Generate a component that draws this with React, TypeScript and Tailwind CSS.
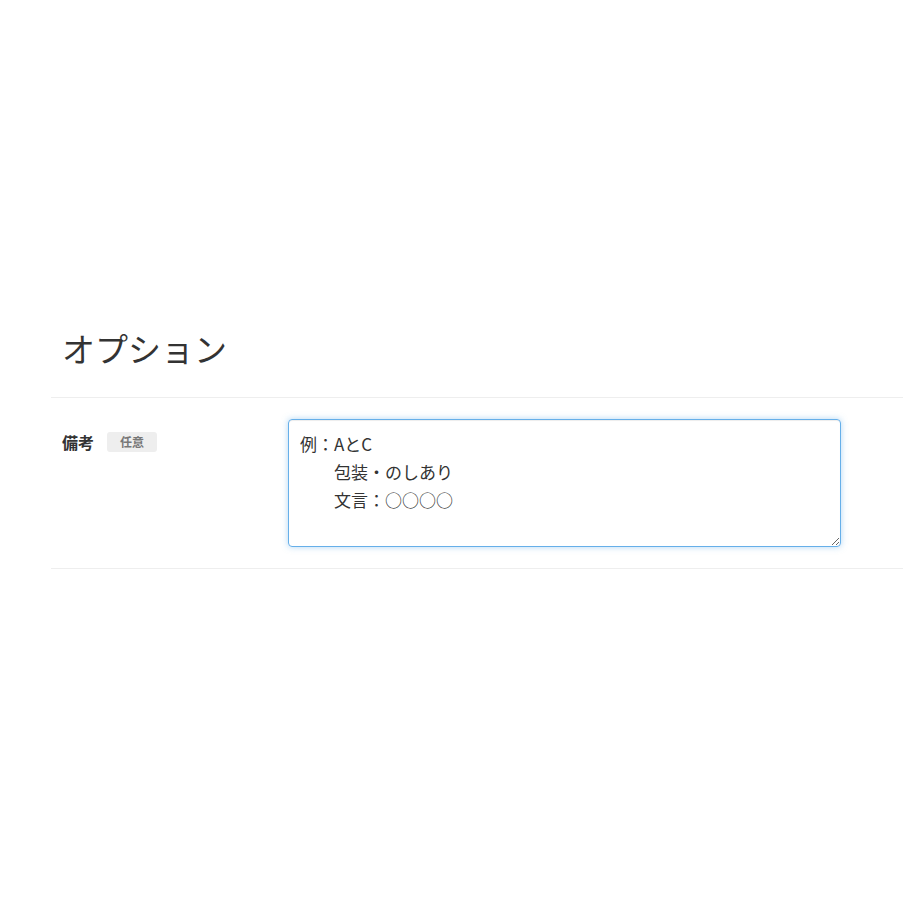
import React from 'react';

const sample = '例：AとC\n\u3000\u3000包装・のしあり\n\u3000\u3000文言：○○○○';

export default function App() {
    return (
        <div className="min-h-[920px] bg-white pt-[324px] pl-[51px] pr-[17px] text-[#333] font-['Noto_Sans_CJK_JP','Noto_Sans',sans-serif]">
            <h2 className="px-[11px] text-[33px] leading-[48px] font-normal text-[#333] mb-[25px]">オプション</h2>
            <div className="flex border-t border-b border-[#eee] py-[21px]">
                <div className="w-[237px] shrink-0 px-[11px] pt-[11px] flex items-center gap-[13px] self-start">
                    <span className="text-[16px] font-bold leading-[24px]">備考</span>
                    <span className="bg-[#eee] text-[#777] text-[12px] font-bold leading-[20px] px-[13px] rounded-[3px]">任意</span>
                </div>
                <textarea
                    className="w-[553px] h-[128px] border border-[#66afe9] rounded-[4px] px-[11px] py-[10px] text-[17px] leading-[28px] text-[#333] outline-none shadow-[inset_0_1px_1px_rgba(0,0,0,0.075),0_0_6px_rgba(102,175,233,0.5)] resize-y"
                    defaultValue={sample}
                />
            </div>
        </div>
    );
}
